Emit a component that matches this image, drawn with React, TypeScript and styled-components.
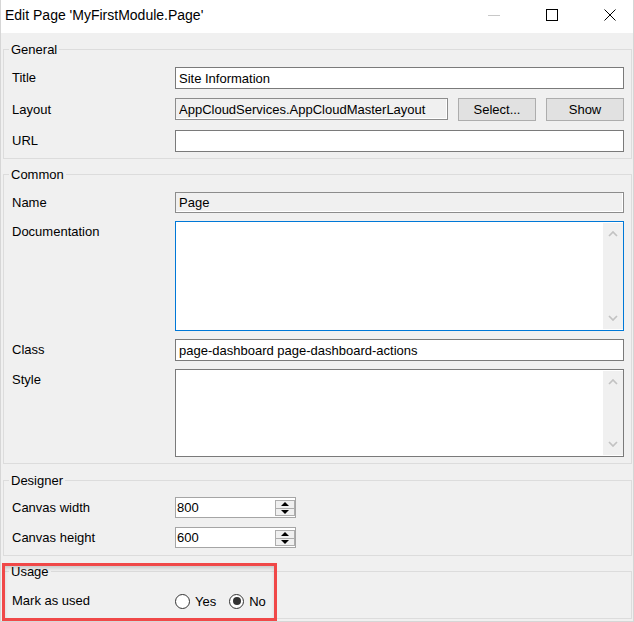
import React from 'react';
import styled, { createGlobalStyle } from 'styled-components';

const GlobalStyle = createGlobalStyle`
  html, body {
    margin: 0;
    padding: 0;
    background: #ffffff;
  }
  body {
    font-family: "Liberation Sans", Arial, sans-serif;
    font-size: 13px;
    color: #000;
  }
`;

const Window = styled.div`
  position: relative;
  width: 634px;
  height: 622px;
  box-sizing: border-box;
  background: #f0f0f0;
  border: 1px solid #d6d6d6;
  border-top: none;
  overflow: hidden;
`;

const TitleBar = styled.div`
  display: flex;
  align-items: flex-start;
  height: 33px;
  background: #fff;
  overflow: hidden;
`;

const TitleText = styled.div`
  padding-left: 4px;
  line-height: 30px;
  font-size: 14px;
  white-space: nowrap;
`;

const CaptionButtons = styled.div`
  display: flex;
  margin-left: auto;
  margin-right: -6px;
`;

const CaptionButton = styled.div`
  width: 58px;
  height: 30px;
  display: flex;
  align-items: center;
  justify-content: center;
`;

const MinimizeGlyph = styled.div`
  width: 12px;
  height: 1px;
  background: #c8c8c8;
`;

const MaximizeGlyph = styled.div`
  width: 12px;
  height: 12px;
  box-sizing: border-box;
  border: 1px solid #000;
`;

const Content = styled.div`
  display: flex;
  flex-direction: column;
  padding: 9px 1px 0 2px;
`;

const Group = styled.fieldset<{ $top: number; $padTop: number; $padBottom: number; $gap: number }>`
  margin: ${(p) => p.$top}px 0 0 0;
  padding: ${(p) => p.$padTop}px 7px ${(p) => p.$padBottom}px 5px;
  border: 1px solid #dcdcdc;
  min-width: 0;
  display: flex;
  flex-direction: column;
  gap: ${(p) => p.$gap}px;
`;

const Legend = styled.legend`
  padding: 0 2px;
  line-height: 15px;
  font-size: 13px;
`;

const Row = styled.div`
  display: grid;
  grid-template-columns: 163px 1fr;
  align-items: start;
  padding-left: 3px;
`;

const Label = styled.div<{ $h?: number }>`
  line-height: ${(p) => p.$h ?? 22}px;
  white-space: nowrap;
`;

const TextInput = styled.input<{ $h?: number; $readonly?: boolean }>`
  box-sizing: border-box;
  width: 100%;
  height: ${(p) => p.$h ?? 22}px;
  margin: 0;
  padding: 0 3px;
  font: inherit;
  font-size: 13px;
  color: #000;
  outline: none;
  border: 1px solid ${(p) => (p.$readonly ? '#8c8c8c' : '#7a7a7a')};
  background: ${(p) => (p.$readonly ? '#f0f0f0' : '#fff')};
  box-shadow: ${(p) => (p.$readonly ? 'inset -1px -1px 0 #ffffff' : 'none')};
`;

const FieldLine = styled.div`
  display: flex;
  gap: 10px;
  align-items: flex-start;
`;

const PushButton = styled.button`
  flex: 0 0 78px;
  height: 23px;
  margin: 0;
  padding: 0;
  font: inherit;
  font-size: 13px;
  color: #000;
  background: #e1e1e1;
  border: 1px solid #adadad;
`;

const MemoBox = styled.div<{ $h: number; $focused?: boolean }>`
  box-sizing: border-box;
  height: ${(p) => p.$h}px;
  border: 1px solid ${(p) => (p.$focused ? '#0078d7' : '#7a7a7a')};
  background: #fff;
  display: flex;
  justify-content: flex-end;
  padding: 1px 0;
`;

const ScrollTrack = styled.div`
  width: 20px;
  background: #f0f0f0;
  display: flex;
  flex-direction: column;
  align-items: center;
  justify-content: space-between;
  padding: 8px 0;
  box-sizing: border-box;
`;

const SpinBox = styled.div`
  box-sizing: border-box;
  width: 121px;
  height: 21px;
  border: 1px solid #a5a5a5;
  background: #fff;
  display: flex;
  padding: 2px 0 1px 0;
`;

const SpinValue = styled.div`
  flex: 1;
  padding-left: 1px;
  margin-top: -2px;
  line-height: 19px;
`;

const SpinButtons = styled.div`
  width: 20px;
  display: flex;
  flex-direction: column;
`;

const SpinButton = styled.div`
  flex: 1;
  box-sizing: border-box;
  border: 1px solid #adadad;
  background: #f0f0f0;
  display: flex;
  align-items: center;
  justify-content: center;
  & + & {
    border-top: none;
  }
`;

const RadioGroup = styled.div`
  display: flex;
  align-items: center;
  height: 22px;
  gap: 13px;
`;

const RadioOption = styled.label`
  display: flex;
  align-items: center;
  gap: 5px;
`;

const RadioCircle = styled.span<{ $checked?: boolean }>`
  width: 15px;
  height: 15px;
  box-sizing: border-box;
  border-radius: 50%;
  border: 1px solid #333;
  background: #fff;
  display: flex;
  align-items: center;
  justify-content: center;
  &::after {
    content: '';
    width: 8px;
    height: 8px;
    border-radius: 50%;
    background: #333;
    display: ${(p) => (p.$checked ? 'block' : 'none')};
  }
`;

const Annotation = styled.div`
  position: absolute;
  left: 1px;
  top: 563px;
  width: 275px;
  height: 58px;
  box-sizing: border-box;
  border: 3px solid #f04848;
  box-shadow: inset 0 3px 4px -1px rgba(0, 0, 0, 0.18);
  pointer-events: none;
`;

const Chevron = ({ down }: { down?: boolean }) => (
  <svg width="10" height="6" viewBox="0 0 10 6">
    <polyline
      points={down ? '1,1 5,5 9,1' : '1,5 5,1 9,5'}
      fill="none"
      stroke="#c2c2c2"
      strokeWidth="1.7"
    />
  </svg>
);

const Triangle = ({ down }: { down?: boolean }) => (
  <svg width="8" height="4" viewBox="0 0 8 4">
    <polygon points={down ? '0,0 8,0 4,4' : '0,4 8,4 4,0'} fill="#000" />
  </svg>
);

const CloseGlyph = () => (
  <svg width="12" height="12" viewBox="0 0 12 12">
    <path d="M0.5 0.5 L11.5 11.5 M11.5 0.5 L0.5 11.5" stroke="#000" strokeWidth="1" />
  </svg>
);

const Memo = ({ height, focused }: { height: number; focused?: boolean }) => (
  <MemoBox $h={height} $focused={focused}>
    <ScrollTrack>
      <Chevron />
      <Chevron down />
    </ScrollTrack>
  </MemoBox>
);

const Spinner = ({ value }: { value: string }) => (
  <SpinBox>
    <SpinValue>{value}</SpinValue>
    <SpinButtons>
      <SpinButton>
        <Triangle />
      </SpinButton>
      <SpinButton>
        <Triangle down />
      </SpinButton>
    </SpinButtons>
  </SpinBox>
);

export default function App() {
  return (
    <Window>
      <GlobalStyle />
      <TitleBar>
        <TitleText>Edit Page 'MyFirstModule.Page'</TitleText>
        <CaptionButtons>
          <CaptionButton>
            <MinimizeGlyph />
          </CaptionButton>
          <CaptionButton>
            <MaximizeGlyph />
          </CaptionButton>
          <CaptionButton>
            <CloseGlyph />
          </CaptionButton>
        </CaptionButtons>
      </TitleBar>

      <Content>
        <Group $top={0} $padTop={10} $padBottom={6} $gap={9}>
          <Legend>General</Legend>
          <Row>
            <Label>Title</Label>
            <TextInput readOnly value="Site Information" />
          </Row>
          <Row>
            <Label $h={23}>Layout</Label>
            <FieldLine>
              <TextInput readOnly $readonly value="AppCloudServices.AppCloudMasterLayout" />
              <PushButton>Select...</PushButton>
              <PushButton>Show</PushButton>
            </FieldLine>
          </Row>
          <Row>
            <Label>URL</Label>
            <TextInput readOnly value="" />
          </Row>
        </Group>

        <Group $top={8} $padTop={10} $padBottom={6} $gap={8}>
          <Legend>Common</Legend>
          <Row>
            <Label $h={21}>Name</Label>
            <TextInput readOnly $readonly $h={21} value="Page" />
          </Row>
          <Row>
            <Label>Documentation</Label>
            <Memo height={110} focused />
          </Row>
          <Row>
            <Label>Class</Label>
            <TextInput readOnly value="page-dashboard page-dashboard-actions" />
          </Row>
          <Row>
            <Label>Style</Label>
            <Memo height={88} />
          </Row>
        </Group>

        <Group $top={9} $padTop={9} $padBottom={7} $gap={9}>
          <Legend>Designer</Legend>
          <Row>
            <Label $h={21}>Canvas width</Label>
            <Spinner value="800" />
          </Row>
          <Row>
            <Label $h={21}>Canvas height</Label>
            <Spinner value="600" />
          </Row>
        </Group>

        <Group $top={8} $padTop={11} $padBottom={6} $gap={0}>
          <Legend>Usage</Legend>
          <Row>
            <Label>Mark as used</Label>
            <RadioGroup>
              <RadioOption>
                <RadioCircle />
                Yes
              </RadioOption>
              <RadioOption>
                <RadioCircle $checked />
                No
              </RadioOption>
            </RadioGroup>
          </Row>
        </Group>
      </Content>

      <Annotation />
    </Window>
  );
}
